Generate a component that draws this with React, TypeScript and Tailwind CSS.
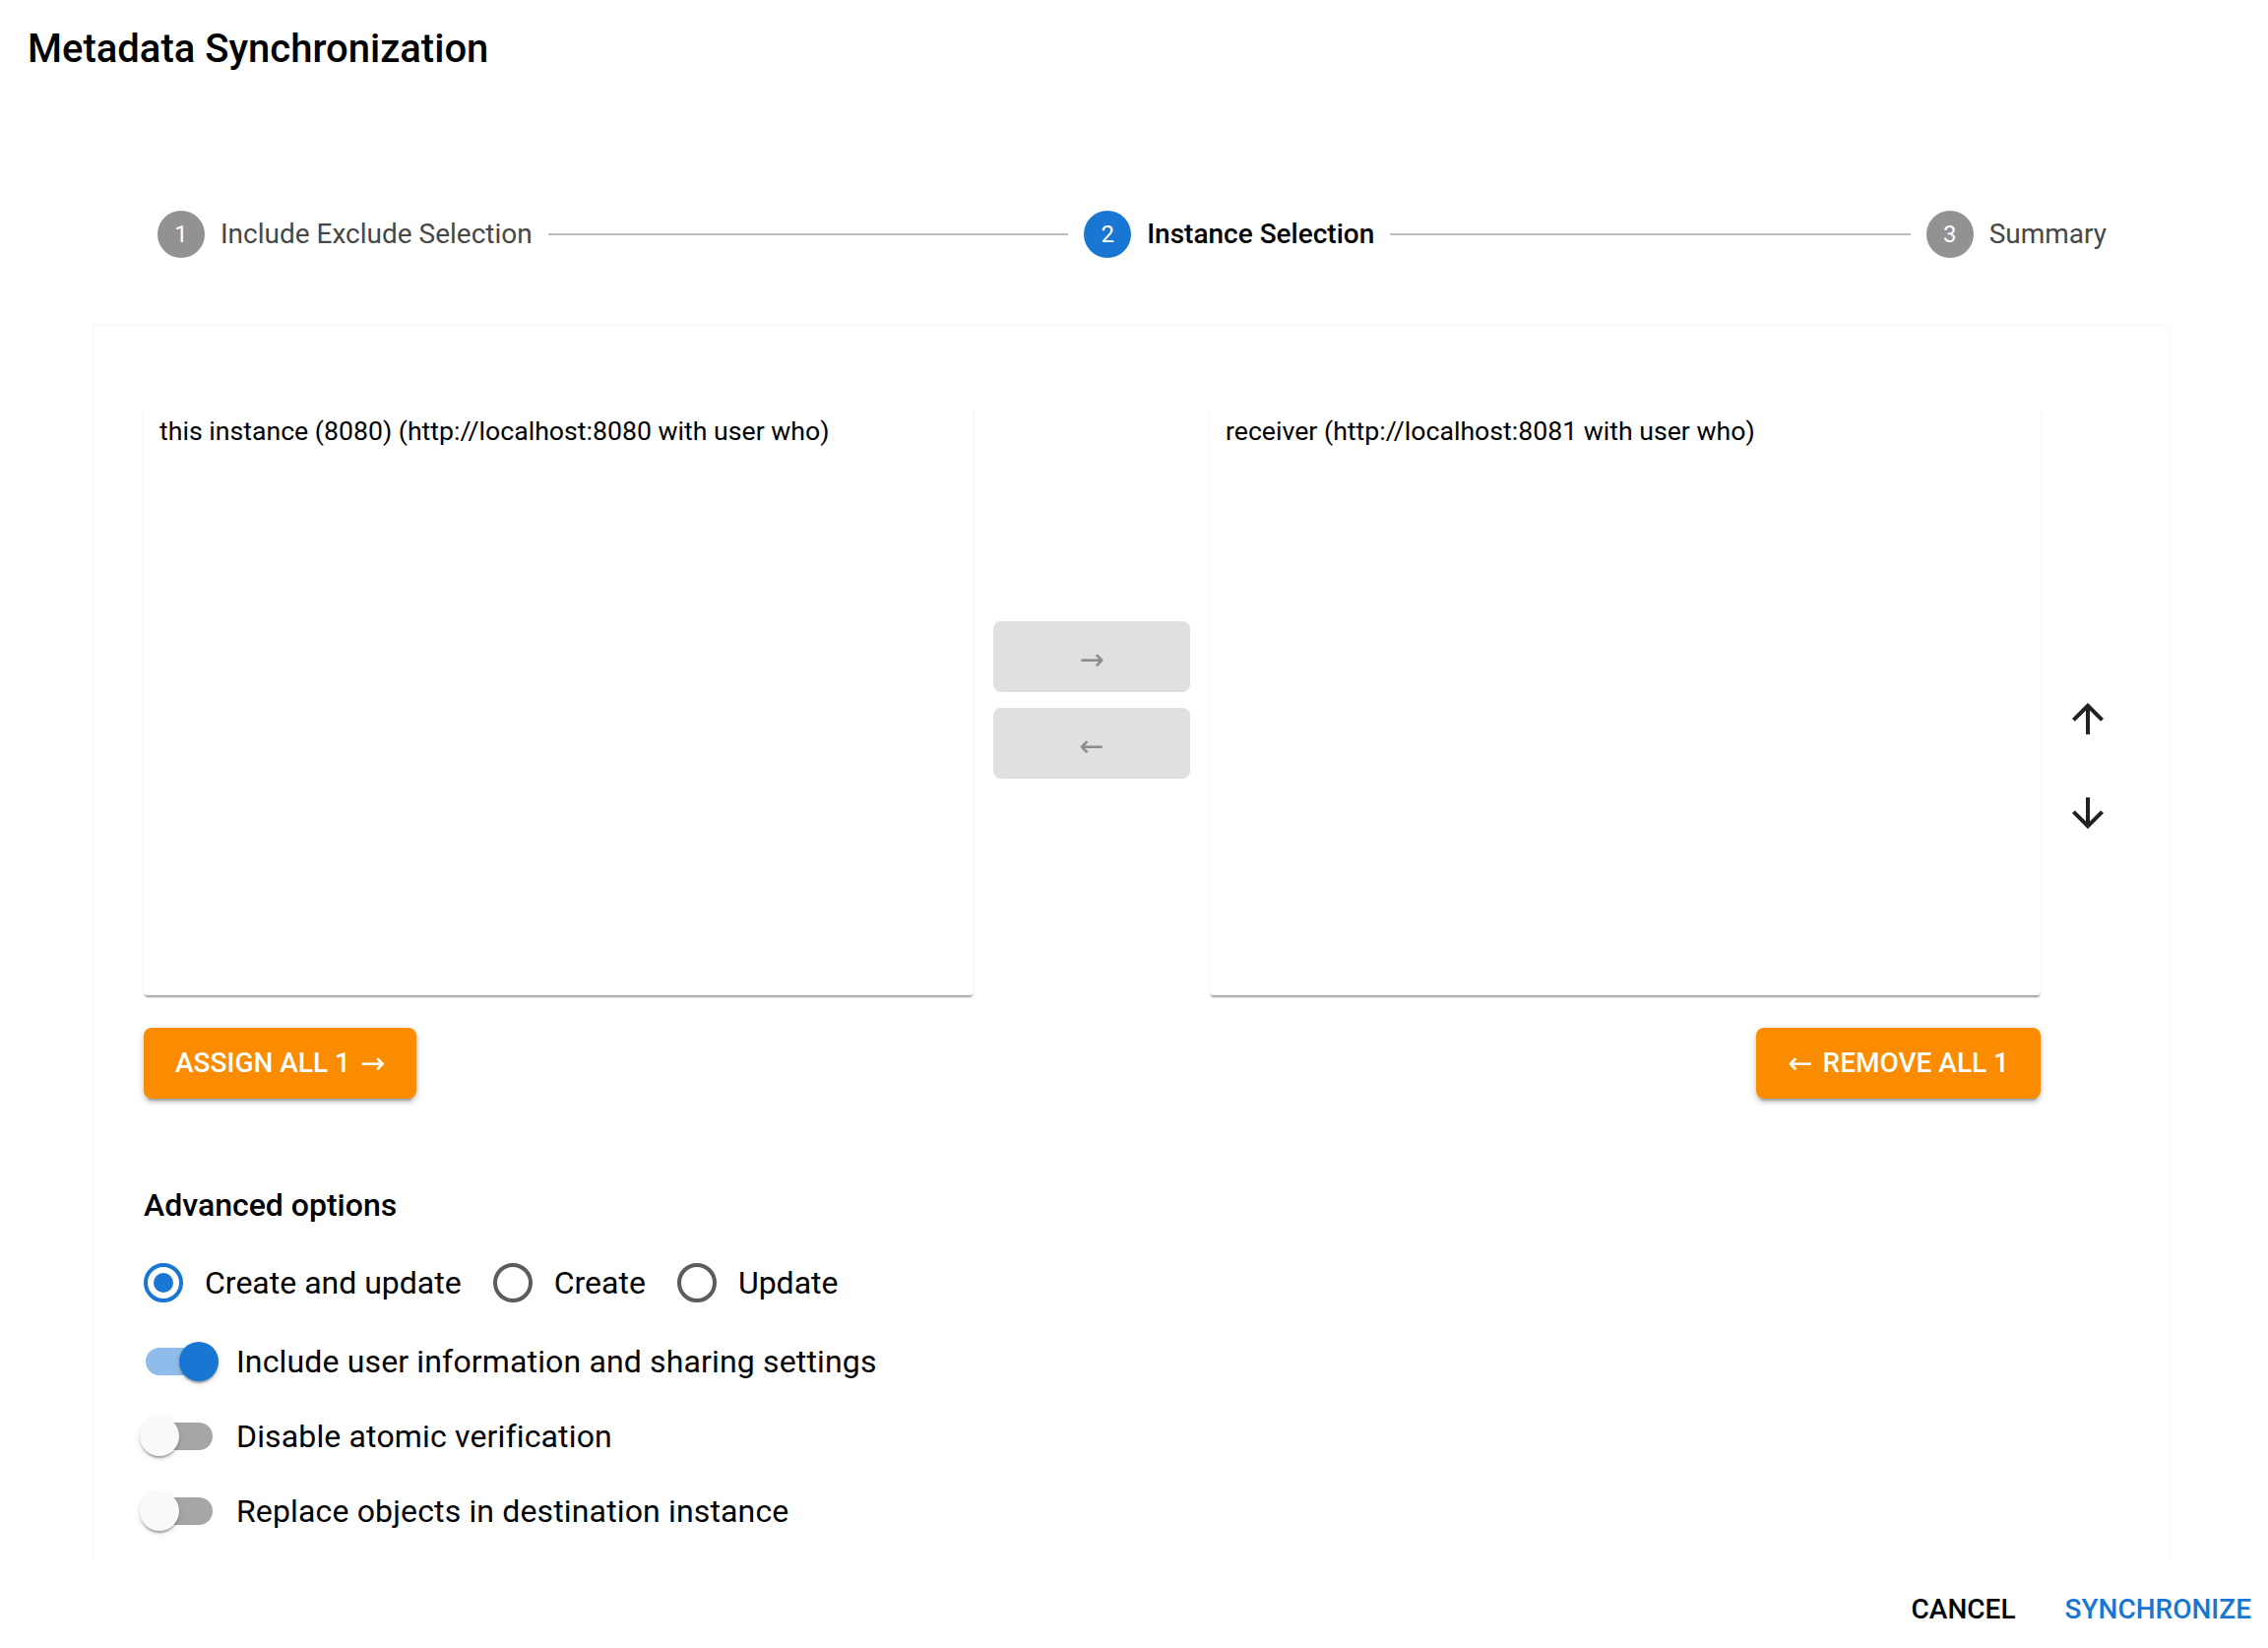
import React from 'react';

const Step: React.FC<{ n: number; label: string; active?: boolean }> = ({ n, label, active }) => (
  <div className="flex items-center px-[16px] shrink-0">
    <div
      className={`w-[48px] h-[48px] rounded-full flex items-center justify-center text-white text-[24px] ${
        active ? 'bg-[#1976d2]' : 'bg-[#929292]'
      }`}
    >
      {n}
    </div>
    <span
      className={`pl-[16px] text-[28px] leading-[40px] ${
        active ? 'text-black font-medium' : 'text-[#474747]'
      }`}
    >
      {label}
    </span>
  </div>
);

const Connector = () => <div className="flex-1 h-[2px] bg-[#bdbdbd]" />;

const Radio: React.FC<{ label: string; checked?: boolean }> = ({ label, checked }) => (
  <label className="flex items-center ml-[-22px] mr-[32px]">
    <span className="w-[84px] h-[84px] flex items-center justify-center">
      <svg width="48" height="48" viewBox="0 0 24 24">
        <circle cx="12" cy="12" r="9" fill="none" stroke={checked ? '#1976d2' : '#5c5c5c'} strokeWidth="2" />
        {checked && <circle cx="12" cy="12" r="5" fill="#1976d2" />}
      </svg>
    </span>
    <span className="text-[32px] leading-[48px] text-black">{label}</span>
  </label>
);

const Switch: React.FC<{ label: string; checked?: boolean }> = ({ label, checked }) => (
  <div className="flex items-center ml-[-22px] h-[76px]">
    <span className="relative w-[116px] h-[76px] shrink-0">
      <span
        className={`absolute left-[24px] top-[24px] w-[68px] h-[28px] rounded-full ${
          checked ? 'bg-[#8fbcea]' : 'bg-[#a6a6a6]'
        }`}
      />
      <span
        className={`absolute top-[18px] w-[40px] h-[40px] rounded-full shadow-[0_4px_2px_-2px_rgba(0,0,0,0.2),0_2px_2px_0_rgba(0,0,0,0.14),0_2px_6px_0_rgba(0,0,0,0.12)] ${
          checked ? 'left-[58px] bg-[#1976d2]' : 'left-[18px] bg-[#fafafa]'
        }`}
      />
    </span>
    <span className="text-[32px] leading-[48px] text-black tracking-[0.15px]">{label}</span>
  </div>
);

const ArrowIcon: React.FC<{ down?: boolean }> = ({ down }) => (
  <svg width="48" height="48" viewBox="0 0 24 24" fill="#212121">
    {down ? (
      <path d="M20 12l-1.41-1.41L13 16.17V4h-2v12.17l-5.58-5.59L4 12l8 8 8-8z" />
    ) : (
      <path d="M4 12l1.41 1.41L11 7.83V20h2V7.83l5.58 5.59L20 12l-8-8-8 8z" />
    )}
  </svg>
);

// arrow glyphs come out tiny in Roboto, so they get their own font
const Arrow: React.FC<{ dir: 'left' | 'right' }> = ({ dir }) => (
  <span className="font-['DejaVu_Sans',sans-serif] font-normal text-[30px] leading-none">
    {dir === 'left' ? '←' : '→'}
  </span>
);

const OrangeButton: React.FC<{ children: React.ReactNode }> = ({ children }) => (
  <button className="h-[72px] px-[32px] rounded-[8px] bg-[#fb8c00] text-white text-[28px] font-medium uppercase flex items-center gap-[10px] shadow-[0_6px_2px_-4px_rgba(0,0,0,0.2),0_4px_4px_0_rgba(0,0,0,0.14),0_2px_10px_0_rgba(0,0,0,0.12)]">
    {children}
  </button>
);

const MoveButton: React.FC<{ children: React.ReactNode }> = ({ children }) => (
  <button className="w-[200px] h-[72px] rounded-[8px] bg-[#e0e0e0] text-[#8c8c8c] flex items-center justify-center pt-[6px]">
    {children}
  </button>
);

const ListBox: React.FC<{ items: string[] }> = ({ items }) => (
  <div className="h-[600px] bg-white rounded-[4px] pl-[16px] pt-[11px] shadow-[0_1px_2px_rgba(0,0,0,0.08),0_3px_2px_-1px_rgba(0,0,0,0.35)]">
    {items.map(item => (
      <div key={item} className="text-[26.67px] leading-[32px] text-black">
        {item}
      </div>
    ))}
  </div>
);

export default function App() {
  return (
    <div className="w-[2304px] h-[1674px] bg-white font-['Roboto',sans-serif] flex flex-col overflow-hidden">
      <div className="h-[1583px] shrink-0 overflow-hidden">
        <h1 className="pl-[28px] pt-[26px] text-[40px] leading-[48px] font-medium text-black">
          Metadata Synchronization
        </h1>

        {/* Stepper */}
        <div className="ml-[96px] w-[2108px] px-[48px] mt-[140px] flex items-center">
          <Step n={1} label="Include Exclude Selection" />
          <Connector />
          <Step n={2} label="Instance Selection" active />
          <Connector />
          <Step n={3} label="Summary" />
        </div>

        {/* Card */}
        <div className="ml-[96px] w-[2108px] mt-[69px] h-[1400px] bg-white pl-[50px] pt-[80px] shadow-[0_0_3px_rgba(0,0,0,0.07)]">
          <div className="flex items-start">
            <div className="w-[843px] flex flex-col items-start">
              <div className="w-full">
                <ListBox items={['this instance (8080) (http://localhost:8080 with user who)']} />
              </div>
              <div className="mt-[33px]">
                <OrangeButton>
                  <span>Assign all 1</span>
                  <Arrow dir="right" />
                </OrangeButton>
              </div>
            </div>

            <div className="w-[240px] h-[600px] flex flex-col items-center justify-center gap-[16px]">
              <MoveButton>
                <Arrow dir="right" />
              </MoveButton>
              <MoveButton>
                <Arrow dir="left" />
              </MoveButton>
            </div>

            <div className="w-[844px] flex flex-col items-end">
              <div className="w-full">
                <ListBox items={['receiver (http://localhost:8081 with user who)']} />
              </div>
              <div className="mt-[33px]">
                <OrangeButton>
                  <Arrow dir="left" />
                  <span>Remove all 1</span>
                </OrangeButton>
              </div>
            </div>

            <div className="w-[96px] pt-[271px] flex flex-col">
              <button className="w-[96px] h-[96px] flex items-center justify-center">
                <ArrowIcon />
              </button>
              <button className="w-[96px] h-[96px] flex items-center justify-center">
                <ArrowIcon down />
              </button>
            </div>
          </div>

          {/* Advanced options */}
          <div className="mt-[84px] text-[32px] leading-[48px] font-medium text-black">Advanced options</div>
          <div className="mt-[13px] flex items-center">
            <Radio label="Create and update" checked />
            <Radio label="Create" />
            <Radio label="Update" />
          </div>
          <Switch label="Include user information and sharing settings" checked />
          <Switch label="Disable atomic verification" />
          <Switch label="Replace objects in destination instance" />
        </div>
      </div>

      {/* Actions */}
      <div className="flex justify-end items-center py-[16px] pr-[1px] gap-[18px]">
        <button className="h-[72px] px-[16px] text-[28px] font-medium text-black">CANCEL</button>
        <button className="h-[72px] px-[16px] text-[28px] font-medium text-[#1976d2]">SYNCHRONIZE</button>
      </div>
    </div>
  );
}
